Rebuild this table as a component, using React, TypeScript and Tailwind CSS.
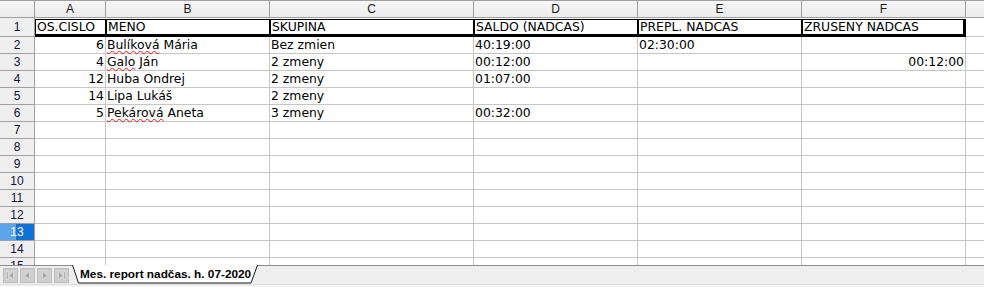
import React from "react";

type Row = {
  id: string;
  name: string;
  misspelled?: string;
  group: string;
  saldo: string;
  prepl: string;
  zrus: string;
};

const rows: Row[] = [
  { id: "6", name: "Mária", misspelled: "Bulíková", group: "Bez zmien", saldo: "40:19:00", prepl: "02:30:00", zrus: "" },
  { id: "4", name: "Ján", misspelled: "Galo", group: "2 zmeny", saldo: "00:12:00", prepl: "", zrus: "00:12:00" },
  { id: "12", name: "Huba Ondrej", group: "2 zmeny", saldo: "01:07:00", prepl: "", zrus: "" },
  { id: "14", name: "Lipa Lukáš", group: "2 zmeny", saldo: "", prepl: "", zrus: "" },
  { id: "5", name: "Aneta", misspelled: "Pekárová", group: "3 zmeny", saldo: "00:32:00", prepl: "", zrus: "" },
];

const headers = ["OS.CISLO", "MENO", "SKUPINA", "SALDO (NADCAS)", "PREPL. NADCAS", "ZRUSENY NADCAS"];
const letters = ["A", "B", "C", "D", "E", "F", ""];

const cellFont = "font-['DejaVu_Sans',sans-serif] text-[12.4px] leading-none text-black";
const uiFont = "font-['Liberation_Sans',Arial,sans-serif] text-[12px] leading-none";

function RowHead({ n, active }: { n: number; active?: boolean }) {
  if (active) {
    return (
      <div className={`relative flex items-center justify-center border-r border-b border-[#a0a0a0] bg-[#1271d6] text-white ${uiFont}`}>
        <div className="absolute inset-y-0 left-0 w-[16px] bg-[#5da5ea]" />
        <span className="relative">{n}</span>
      </div>
    );
  }
  return (
    <div className={`flex items-center justify-center border-r border-b border-[#a0a0a0] bg-[#efefef] text-[#14143c] ${uiFont}`}>
      {n}
    </div>
  );
}

function Cell({ children, right, last }: { children?: React.ReactNode; right?: boolean; last?: boolean }) {
  return (
    <div
      className={`flex items-center overflow-visible whitespace-nowrap border-b border-[#c6c6c6] pt-[1px] ${last ? "" : "border-r"} ${
        right ? "justify-end pr-[1px]" : "pl-[1px]"
      } ${cellFont}`}
    >
      {children}
    </div>
  );
}

function Spell({ word }: { word: string }) {
  return (
    <span className="underline decoration-wavy decoration-[#e01b1b] decoration-1 underline-offset-[1px]">{word}</span>
  );
}

function NavButton({ kind }: { kind: "first" | "prev" | "next" | "last" }) {
  const fill = "#a6a6a6";
  const edge = "#e8e8e8";
  return (
    <div className="flex h-[15px] w-[15px] items-center justify-center border border-[#bdbdbd] bg-[#cfcfcf]">
      <svg width="11" height="11" viewBox="0 0 11 11">
        {kind === "first" && (
          <>
            <rect x="1.5" y="1.5" width="1.6" height="8" fill={fill} stroke={edge} strokeWidth="0.6" />
            <path d="M8.5 1.5 L4 5.5 L8.5 9.5 Z" fill={fill} stroke={edge} strokeWidth="0.6" />
          </>
        )}
        {kind === "prev" && <path d="M7.5 1.5 L3 5.5 L7.5 9.5 Z" fill={fill} stroke={edge} strokeWidth="0.6" />}
        {kind === "next" && <path d="M3.5 1.5 L8 5.5 L3.5 9.5 Z" fill={fill} stroke={edge} strokeWidth="0.6" />}
        {kind === "last" && (
          <>
            <path d="M2.5 1.5 L7 5.5 L2.5 9.5 Z" fill={fill} stroke={edge} strokeWidth="0.6" />
            <rect x="7.9" y="1.5" width="1.6" height="8" fill={fill} stroke={edge} strokeWidth="0.6" />
          </>
        )}
      </svg>
    </div>
  );
}

export default function App() {
  const dataRowCount = 14; // rows 2..15

  return (
    <div className="h-[287px] w-[984px] overflow-hidden bg-white">
      {/* Sheet grid */}
      <div className="h-[265px] overflow-hidden">
        <div className="grid grid-cols-[35px_71px_164px_204px_164px_164px_164px_1fr] grid-rows-[18px_19px_repeat(14,17px)]">
          {/* Column header row */}
          <div className="border-t border-r border-b border-[#a0a0a0] bg-gradient-to-b from-[#f6f6f6] to-[#ececec]" />
          {letters.map((l, i) => (
            <div
              key={`h${i}`}
              className={`flex items-center justify-center border-t border-b border-[#a0a0a0] bg-gradient-to-b from-[#f6f6f6] to-[#ececec] text-[#1a1a1a] ${
                i < letters.length - 1 ? "border-r" : ""
              } ${uiFont}`}
            >
              {l}
            </div>
          ))}

          {/* Row 1: bordered titles */}
          <RowHead n={1} />
          {headers.map((h, i) => (
            <div key={`t${i}`} className="pt-[1px]">
              <div
                className={`flex h-full items-center whitespace-nowrap border-t border-b-[3px] border-l border-black pl-[1px] ${
                  i === headers.length - 1 ? "border-r-[3px]" : "border-r"
                } ${cellFont}`}
              >
                {h}
              </div>
            </div>
          ))}
          <div className="border-b border-[#c6c6c6]" />

          {/* Data and empty rows */}
          {Array.from({ length: dataRowCount }, (_, k) => {
            const n = k + 2;
            const r = rows[k];
            return (
              <React.Fragment key={`r${n}`}>
                <RowHead n={n} active={n === 13} />
                <Cell right>{r?.id}</Cell>
                <Cell>
                  {r &&
                    (r.misspelled ? (
                      <span>
                        <Spell word={r.misspelled} /> {r.name}
                      </span>
                    ) : (
                      r.name
                    ))}
                </Cell>
                <Cell>{r?.group}</Cell>
                <Cell>{r?.saldo}</Cell>
                <Cell>{r?.prepl}</Cell>
                <Cell right>{r?.zrus}</Cell>
                <Cell last />
              </React.Fragment>
            );
          })}
        </div>
      </div>

      {/* Sheet tab bar */}
      <div className="flex h-[22px] flex-col bg-[#efefef]">
        <div className="flex h-[19px]">
          <div className="flex w-[72px] items-center gap-[2px] border-t border-[#8c8c8c] pl-[3px]">
            <NavButton kind="first" />
            <NavButton kind="prev" />
            <NavButton kind="next" />
            <NavButton kind="last" />
          </div>
          <div className="relative flex w-[186px] items-center pl-[8px]">
            <svg className="absolute inset-0" width="186" height="19" viewBox="0 0 186 19">
              <path d="M0.5 0 L6.5 18 L179 18 L185.5 0 Z" fill="#ffffff" />
              <path d="M0.5 0 L6.5 18 L179 18 L185.5 0" fill="none" stroke="#1a1a1a" strokeWidth="1" />
            </svg>
            <span className="relative font-['Liberation_Sans',Arial,sans-serif] text-[11.8px] font-bold leading-none text-black">
              Mes. report nadčas. h. 07-2020
            </span>
          </div>
          <div className="flex-1 border-t border-[#8c8c8c]" />
        </div>
        <div className="flex-1 border-t border-[#dedede] bg-[#f4f4f4]" />
      </div>
    </div>
  );
}
